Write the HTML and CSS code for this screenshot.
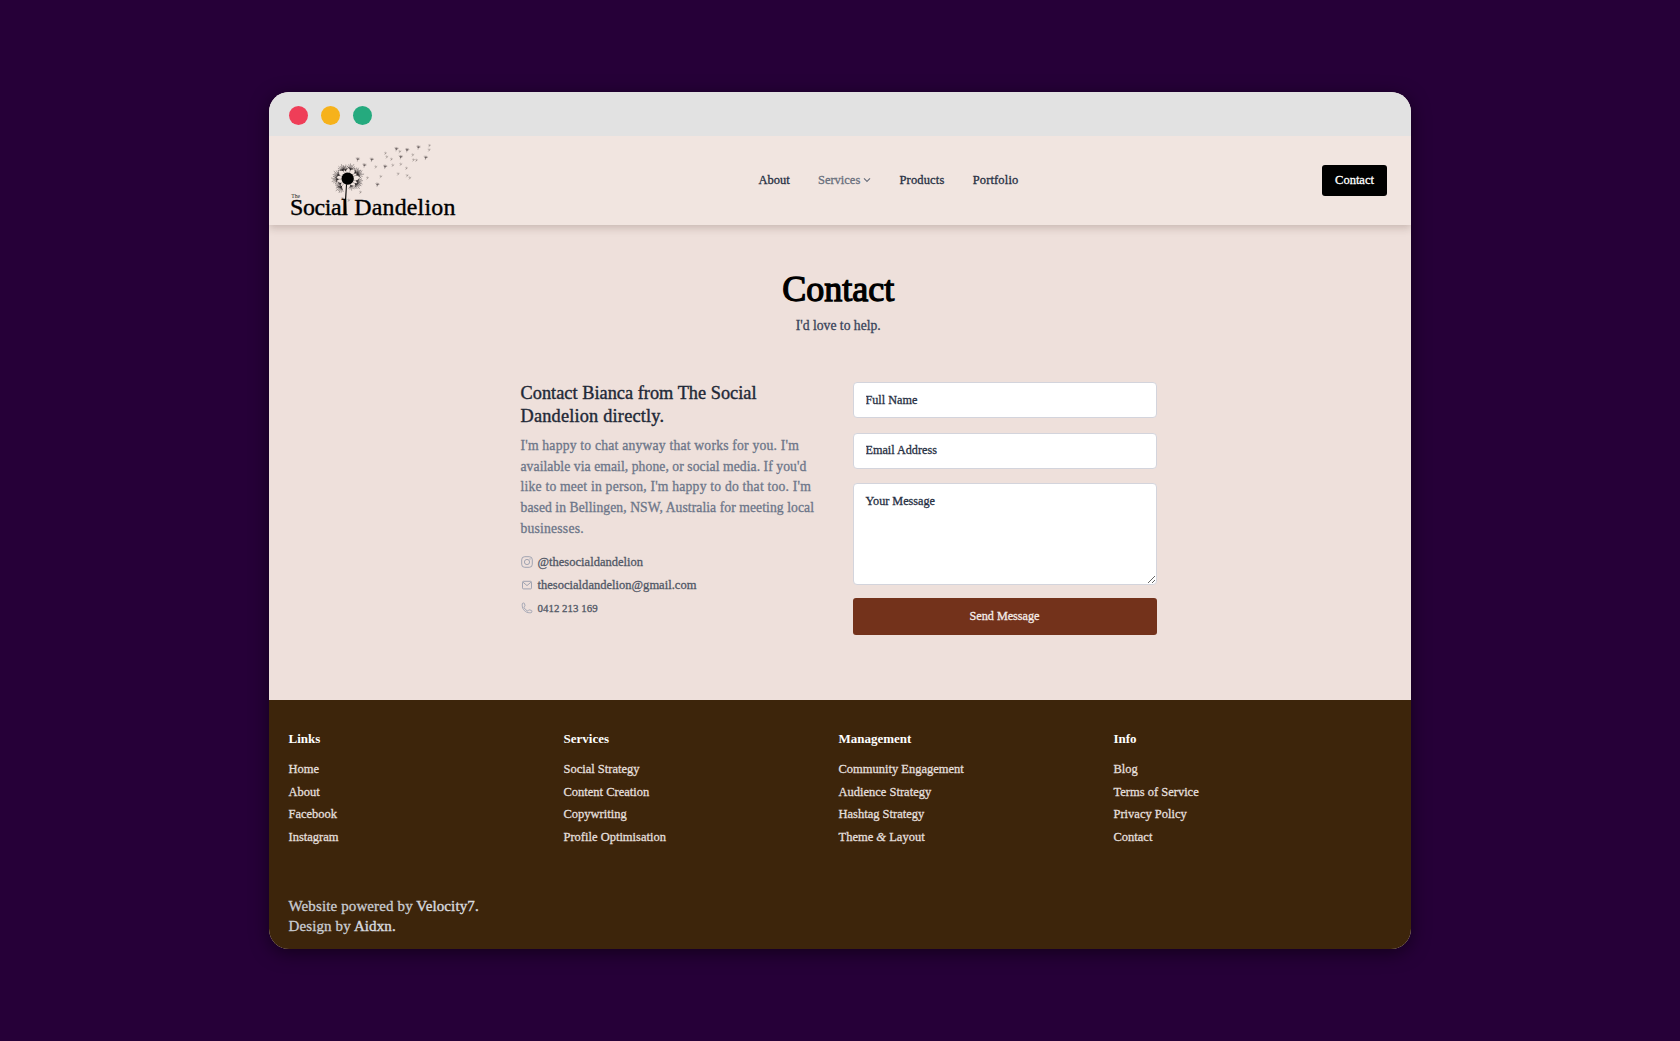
FILE: index.html
```html
<!DOCTYPE html>
<html lang="en">
<head>
<meta charset="utf-8">
<title>Contact | The Social Dandelion</title>
<link rel="stylesheet" href="styles.css">
</head>
<body>
<div class="window">
  <div class="titlebar"><span class="dot red"></span><span class="dot amber"></span><span class="dot green"></span></div>
  <header class="header">
    <svg class="logo" viewBox="87 165 504 240" role="img" aria-label="The Social Dandelion">
      <defs>
        <g id="tuft" fill="none" stroke="#241f20" stroke-linecap="round">
          <path stroke-width=".8" d="M0-18V-31"/>
          <path stroke-width="1" d="M0-28L-12-36M0-28L-9-41M0-28L-5-45M0-28L0-42M0-28L5-46M0-28L9-40M0-28L12-35"/>
          <path stroke-width="3.5" stroke-opacity=".6" d="M-6-33Q0-29 6-33"/>
        </g>
        <g id="seed" fill="none" stroke="#5c5352" stroke-width="1" stroke-linecap="round">
          <path d="M-1 6L0 0M0 1L-5-3M0 1L-2-5M0 1L1-5M0 1L4-4M0 1L6-1"/>
          <path stroke-width="1.8" d="M-2-1L3-1"/>
        </g>
        <g id="speck" fill="none" stroke="#7d7371" stroke-width="1" stroke-linecap="round">
          <path d="M-2 4L1 0M1 0L-3-2M1 0L0-4M1 0L4-2"/>
        </g>
      </defs>
      <g transform="translate(263 281)">
        <use href="#tuft" transform="rotate(-30)"/><use href="#tuft" transform="rotate(-14) scale(.9)"/>
        <use href="#tuft" transform="rotate(17)"/><use href="#tuft" transform="rotate(52)"/>
        <use href="#tuft" transform="rotate(68) scale(1.08)"/><use href="#tuft" transform="rotate(104)"/>
        <use href="#tuft" transform="rotate(124)"/><use href="#tuft" transform="rotate(155) scale(.8)"/>
        <use href="#tuft" transform="rotate(218) scale(1.08)"/><use href="#tuft" transform="rotate(236) scale(.9)"/>
        <use href="#tuft" transform="rotate(266) scale(1.05)"/><use href="#tuft" transform="rotate(292)"/>
        <circle r="18.5"/>
      </g>
      <path d="M258 298Q254 345 254 389H260Q257 340 261 298Z"/>
      <use href="#seed" x="293" y="223"/><use href="#seed" x="335" y="224"/><use href="#seed" x="313" y="241"/>
      <use href="#seed" x="409" y="192"/><use href="#seed" x="441" y="195"/><use href="#seed" x="475" y="187"/>
      <use href="#seed" x="497" y="218"/><use href="#seed" x="422" y="216"/><use href="#seed" x="375" y="245"/>
      <use href="#speck" x="347" y="246"/><use href="#speck" x="376" y="205"/><use href="#speck" x="380" y="216"/>
      <use href="#speck" x="394" y="223"/><use href="#speck" x="419" y="200"/><use href="#speck" x="422" y="238"/>
      <use href="#speck" x="458" y="210"/><use href="#speck" x="460" y="225"/><use href="#speck" x="469" y="226"/>
      <use href="#speck" x="508" y="182"/><use href="#speck" x="507" y="195"/><use href="#speck" x="398" y="241"/>
      <use href="#speck" x="439" y="250"/><use href="#speck" x="414" y="267"/><use href="#speck" x="441" y="272"/>
      <use href="#speck" x="449" y="279"/><use href="#speck" x="362" y="275"/><use href="#seed" x="352" y="299"/>
      <use href="#speck" x="322" y="279"/><use href="#speck" x="301" y="322"/><use href="#speck" x="247" y="341"/>
      <use href="#speck" x="266" y="346"/>
      <text class="logo-the" x="94" y="338" textLength="26">The</text>
      <text class="logo-name" x="90" y="391" textLength="174">Social</text>
      <text class="logo-name" x="283" y="391" textLength="303">Dandelion</text>
    </svg>
    <nav class="nav">
      <a>About</a>
      <a class="muted">Services<svg class="chevron" viewBox="0 0 8 6"><path d="M1 1.3L4 4.3L7 1.3"/></svg></a>
      <a class="wide">Products</a>
      <a class="wide">Portfolio</a>
    </nav>
    <a class="cta">Contact</a>
  </header>
  <main class="main">
    <h1>Contact</h1>
    <p class="sub">I'd love to help.</p>
    <div class="columns">
      <section class="details">
        <h2>Contact Bianca from The Social<br><span class="t3">Dandelion directly.</span></h2>
        <p><span class="t3">I'm happy to chat anyway that works for you. I'm</span><br><span class="t1">available via email, phone, or social media. If you'd</span><br><span class="t3">like to meet in person, I'm happy to do that too. I'm</span><br><span class="t1">based in Bellingen, NSW, Australia for meeting local</span><br><span class="t3">businesses.</span></p>
        <ul>
          <li><svg viewBox="0 0 12 12"><rect x=".7" y=".7" width="10.6" height="10.6" rx="3"/><circle cx="6" cy="6" r="2.6"/><circle cx="9" cy="3" r=".25"/></svg>@thesocialdandelion</li>
          <li><svg viewBox="0 0 12 12"><rect x="1.5" y="2.3" width="9" height="7.6" rx="1"/><path d="M2 3.2L6 6.6L10 3.2"/></svg>thesocialdandelion@gmail.com</li>
          <li class="phone"><svg viewBox="0 0 24 24"><path stroke-width="1.7" d="M2.5 6.8c0 8.2 6.6 14.7 14.7 14.7h2.3a2.2 2.2 0 0 0 2.2-2.2v-1.4c0-.5-.4-1-.9-1.1l-4.4-1.1c-.4-.1-.9.1-1.2.4l-1 1.3c-.3.4-.8.5-1.2.4a12 12 0 0 1-7.1-7.1c-.2-.5 0-1 .4-1.2l1.3-1c.3-.3.5-.7.4-1.2L6.900 3c-.1-.5-.6-.9-1.1-.9H4.500a2.200 2.200 0 0 0-2 2.200z"/></svg>0412 213 169</li>
        </ul>
      </section>
      <form class="form">
        <input type="text" placeholder="Full Name">
        <input type="text" placeholder="Email Address">
        <textarea placeholder="Your Message"></textarea>
        <button type="button">Send Message</button>
      </form>
    </div>
  </main>
  <footer class="footer">
    <div class="links">
      <div><h3>Links</h3><a>Home</a><a>About</a><a>Facebook</a><a>Instagram</a></div>
      <div><h3>Services</h3><a>Social Strategy</a><a>Content Creation</a><a>Copywriting</a><a>Profile Optimisation</a></div>
      <div><h3>Management</h3><a>Community Engagement</a><a>Audience Strategy</a><a>Hashtag Strategy</a><a>Theme <i>&amp;</i> Layout</a></div>
      <div><h3>Info</h3><a>Blog</a><a>Terms of Service</a><a>Privacy Policy</a><a>Contact</a></div>
    </div>
    <p class="credits">Website powered by <b>Velocity7.</b><br>Design by <b>Aidxn.</b></p>
  </footer>
</div>
</body>
</html>
```
FILE: styles.css
```css
* { box-sizing: border-box; margin: 0; padding: 0; }
body {
  height: 1041px;
  overflow: hidden;
  padding: 92px 0 0 268.5px;
  background: #260038;
  font-family: "Liberation Serif", "Times New Roman", serif;
  font-size: 12.5px;
  line-height: 18px;
  -webkit-text-stroke: .3px currentColor;
}
.window {
  width: 1142.5px;
  height: 857px;
  display: flex;
  flex-direction: column;
  overflow: hidden;
  border-radius: 20px;
  background: #eee0db;
  box-shadow: 0 4px 18px rgba(0, 0, 0, .5);
}
.titlebar {
  flex: 0 0 44px;
  display: flex;
  align-items: center;
  gap: 13.4px;
  padding: 2px 20px 0;
  background: #e2e2e2;
}
.dot { width: 19px; height: 19px; border-radius: 50%; }
.red { background: #ef3e58; }
.amber { background: #f6b21b; }
.green { background: #25aa7e; }
.header {
  flex: 0 0 89px;
  display: grid;
  grid-template-columns: 470px 1fr auto;
  align-items: center;
  padding: 0 24px 0 20px;
  background: #f1e5e0;
  box-shadow: 0 3px 8px rgba(70, 40, 30, .22);
  clip-path: inset(0 0 -20px 0);
  z-index: 1;
}
.logo { width: 168px; height: 80px; margin-bottom: 1px; }
.logo-the { font-size: 17px; fill: #222; stroke: none; }
.logo-name { font-size: 71.7px; stroke: #000; stroke-width: 1.2px; }
.nav { display: flex; gap: 28.2px; margin-bottom: 2px; color: #273043; }
.nav a { display: flex; align-items: center; }
.nav .wide { letter-spacing: .15px; }
.muted { color: #6a707d; }
.chevron { width: 8px; height: 6px; margin: 1px 0 0 3px; fill: none; stroke: currentColor; stroke-width: 1.2; }
.cta {
  width: 65px;
  height: 31px;
  margin-bottom: 1px;
  border-radius: 3px;
  background: #000;
  color: #fff;
  line-height: 31px;
  text-align: center;
}
.main { flex: 0 0 475px; padding-top: 44px; }
h1 { font-size: 36px; font-weight: 400; line-height: 40px; text-align: center; -webkit-text-stroke: 1.3px #000; padding-right: 3px; }
.sub { margin-top: 6px; padding-right: 3px; font-size: 13.65px; line-height: 22px; text-align: center; color: #39445a; }
.columns { display: grid; grid-template-columns: 302px 304px; gap: 30px; padding: 45px 0 0 252px; }
h2 { font-size: 18.3px; font-weight: 400; line-height: 23px; color: #1f2937; letter-spacing: .03px; -webkit-text-stroke-width: .4px; }
.details p { margin-top: 8px; font-size: 13.66px; line-height: 20.7px; color: #6d7689; white-space: nowrap; }
.t1 { letter-spacing: .06px; }
.t3 { letter-spacing: .2px; }
ul { display: grid; gap: 4.8px; margin-top: 13.5px; list-style: none; color: #515866; }
li { display: flex; align-items: center; gap: 5px; height: 18px; letter-spacing: .02px; }
li svg { width: 12px; height: 12px; fill: none; stroke: #979dad; stroke-width: .9; }
.phone { font-size: 10.9px; }
.form { display: flex; flex-direction: column; }
.form input, .form textarea {
  width: 304px;
  height: 36px;
  margin-bottom: 14.6px;
  padding: 0 12px;
  border: 1px solid #d3d4dc;
  border-radius: 4px;
  background: #fff;
  font: 12.2px/18px "Liberation Serif", "Times New Roman", serif;
  -webkit-text-stroke: .3px currentColor;
}
.form textarea { height: 102px; padding-top: 8px; margin-bottom: 12.8px; }
.form ::placeholder { color: #273043; opacity: 1; }
.form button {
  height: 37px;
  border: 0;
  border-radius: 3px;
  background: #73321b;
  color: #f4ebe7;
  font: 12.2px/18px "Liberation Serif", "Times New Roman", serif;
  -webkit-text-stroke: .3px currentColor;
}
.footer { flex: 1; padding: 29px 20px 0; background: #3d250b; color: #e3dfdb; }
.links { display: grid; grid-template-columns: repeat(4, 275px); }
.links div { display: flex; flex-direction: column; gap: 4.8px; }
h3 { font-size: 13px; line-height: 20px; margin-bottom: 6px; color: #fff; -webkit-text-stroke-width: 0; }
.credits { margin-top: 50px; font-size: 15px; line-height: 20px; letter-spacing: .12px; color: #c9cbd1; }
.credits b { font-weight: 400; color: #d7d9df; -webkit-text-stroke-width: .4px; }
```
